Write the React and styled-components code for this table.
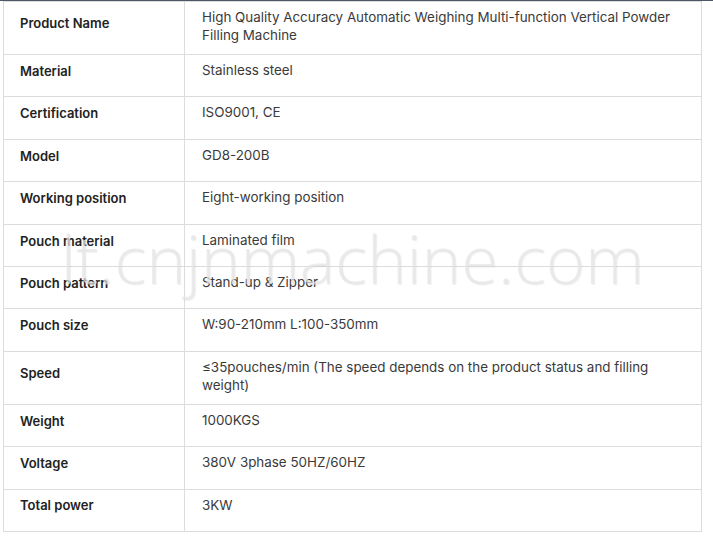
import React from "react";
import styled, { createGlobalStyle } from "styled-components";

const Global = createGlobalStyle`
  html, body { margin: 0; padding: 0; background: #fff; }
  body { font-family: Inter, "Noto Sans", sans-serif; }
  * { box-sizing: border-box; }
`;

const TopRule = styled.div`
  height: 1px;
  background: #4e5766;
`;

const Wrap = styled.div`
  position: relative;
  margin-left: 3px;
  width: 699px;
`;

const Table = styled.div`
  border: 1px solid #dcdcdc;
  border-bottom: none;
`;

const Row = styled.div`
  display: grid;
  grid-template-columns: 181px 1fr;
  min-height: 42.4px;
  border-bottom: 1px solid #dcdcdc;
`;

const Label = styled.div`
  display: flex;
  align-items: center;
  padding: 6px 16px 15.5px 16px;
  border-right: 1px solid #dcdcdc;
  font-size: 13px;
  font-weight: 600;
  line-height: 18px;
  color: #222;
`;

const Value = styled.div`
  padding: 6px 18px 10px 17px;
  font-size: 13.4px;
  font-weight: 400;
  line-height: 18px;
  color: #3a3a3a;
`;

const Watermark = styled.div`
  position: absolute;
  left: 0;
  right: 0;
  top: 217px;
  text-align: center;
  font-family: "Open Sans", sans-serif;
  font-weight: 300;
  font-size: 67px;
  line-height: 80px;
  color: rgba(228, 228, 228, 0.72);
  text-shadow: 1px 1px 1px rgba(0, 0, 0, 0.06);
  pointer-events: none;
  white-space: nowrap;
`;

const rows = [
  ["Product Name", "High Quality Accuracy Automatic Weighing Multi-function Vertical Powder Filling Machine"],
  ["Material", "Stainless steel"],
  ["Certification", "ISO9001, CE"],
  ["Model", "GD8-200B"],
  ["Working position", "Eight-working position"],
  ["Pouch material", "Laminated film"],
  ["Pouch pattern", "Stand-up & Zipper"],
  ["Pouch size", "W:90-210mm L:100-350mm"],
  ["Speed", "≤35pouches/min (The speed depends on the product status and filling weight)"],
  ["Weight", "1000KGS"],
  ["Voltage", "380V 3phase 50HZ/60HZ"],
  ["Total power", "3KW"],
];

export default function App() {
  return (
    <>
      <Global />
      <TopRule />
      <Wrap>
        <Table>
          {rows.map(([k, v]) => (
            <Row key={k}>
              <Label>{k}</Label>
              <Value>{v}</Value>
            </Row>
          ))}
        </Table>
        <Watermark>lt.cnjnmachine.com</Watermark>
      </Wrap>
    </>
  );
}
